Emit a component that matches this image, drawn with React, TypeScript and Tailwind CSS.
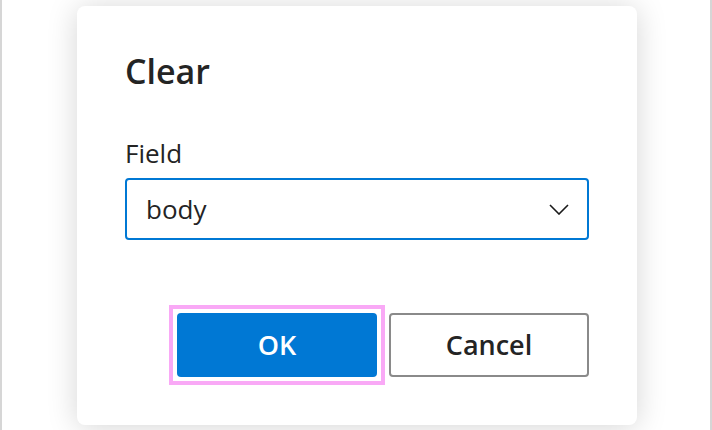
export default function App() {
  return (
    <div
      className="w-[712px] h-[430px] overflow-hidden bg-white border-x-2 border-[#d6d6d6] flex justify-center pt-[6px] pl-[2px]"
      style={{ fontFamily: '"Segoe UI", "Open Sans", "Noto Sans", sans-serif' }}
    >
      <div className="w-[560px] h-[419px] shrink-0 rounded-lg bg-white px-12 pt-12 pb-12 shadow-[0_2px_30px_rgba(0,0,0,0.17)] flex flex-col">
        {/* Header */}
        <h2 className="text-[34px] leading-none font-semibold text-[#242424]">Clear</h2>

        {/* Field */}
        <label className="mt-[52px] text-[26px] leading-none text-[#242424]">Field</label>
        <div className="mt-3 h-[62px] rounded-[4px] border-2 border-[#0078d4] flex items-center justify-between pl-[19px] pr-[18px]">
          <span className="text-[26px] leading-none text-[#242424]">body</span>
          <svg width="20" height="11" viewBox="0 0 20 11" fill="none">
            <path d="M1 1 L10 10 L19 1" stroke="#1a1a1a" strokeWidth="1.6" />
          </svg>
        </div>

        {/* Footer */}
        <div className="mt-[73px] flex justify-end items-center gap-1">
          <div className="-my-2 border-4 border-[#f9a9f6] p-1">
            <button className="block w-[200px] h-16 rounded-[4px] bg-[#0078d4] text-white text-[27px] font-semibold">
              OK
            </button>
          </div>
          <button className="w-[200px] h-16 rounded-[4px] border-2 border-[#8a8a8a] bg-white text-[#242424] text-[27px] font-semibold">
            Cancel
          </button>
        </div>
      </div>
    </div>
  )
}
